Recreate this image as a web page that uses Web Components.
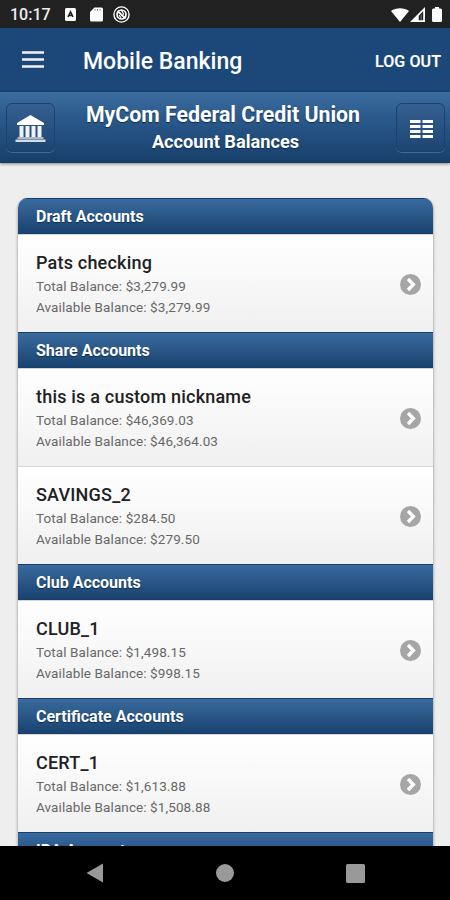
<!DOCTYPE html>
<html lang="en">
<head>
<meta charset="utf-8">
<title>Mobile Banking</title>
<style>
    html, body {
        margin: 0;
        height: 100%;
        overflow: hidden;
        background: #eeeeee;
        font-family: Roboto, "Liberation Sans", sans-serif;
    }
    body {
        display: flex;
        flex-direction: column;
    }
</style>
</head>
<body>
<status-bar time="10:17"></status-bar>
<app-bar action="LOG OUT">Mobile Banking</app-bar>
<page-header>
    <span slot="title">MyCom Federal Credit Union</span>
    <span slot="subtitle">Account Balances</span>
</page-header>
<account-list>
    <account-group label="Draft Accounts">
        <account-item total="$3,279.99" available="$3,279.99">Pats checking</account-item>
    </account-group>
    <account-group label="Share Accounts">
        <account-item total="$46,369.03" available="$46,364.03">this is a custom nickname</account-item>
        <account-item total="$284.50" available="$279.50">SAVINGS_2</account-item>
    </account-group>
    <account-group label="Club Accounts">
        <account-item total="$1,498.15" available="$998.15">CLUB_1</account-item>
    </account-group>
    <account-group label="Certificate Accounts">
        <account-item total="$1,613.88" available="$1,508.88">CERT_1</account-item>
    </account-group>
    <account-group label="IRA Accounts"></account-group>
</account-list>
<nav-bar></nav-bar>

<script>
// attach an open shadow root filled from a markup string
function render(element, markup) {
    const template = document.createElement('template');
    template.innerHTML = markup;
    element.attachShadow({ mode: 'open' });
    element.shadowRoot.appendChild(template.content.cloneNode(true));
}

// <status-bar> system clock, notifications and signal icons
class StatusBar extends HTMLElement {
    constructor() {
        super();
        render(this, `
            <style>
                :host {
                    display: flex;
                    flex: none;
                    align-items: center;
                    box-sizing: border-box;
                    height: 28px;
                    padding: 1px 8px 0 10px;
                    background: #212121;
                    color: #eee;
                    font-size: 16px;
                    font-weight: 500;
                }
                #time { width: 55px; }
                svg { display: block; fill: #fff; }
                .left { display: flex; align-items: center; }
                .right { display: flex; align-items: center; margin-left: auto; }
            </style>
            <span id="time"></span>
            <div class="left">
                <svg width="11" height="13" viewBox="0 0 11 13"><rect width="11" height="13" rx="1.5"/><path d="M3 9 5.500 3.800 8 9M4 7.500h3" fill="none" stroke="#212121" stroke-width="1.600"/></svg>
                <svg width="13" height="15" viewBox="0 0 13 15" style="margin-left:14px"><path d="M4.500.500H11.500a1.500 1.500 0 0 1 1.500 1.500v11a1.500 1.500 0 0 1-1.500 1.500h-10A1.500 1.500 0 0 1 0 13V5z"/><path d="M5 2v1.500M7.500 2v1.500M10 2v1.500" stroke="#212121" stroke-width="1" opacity=".6"/></svg>
                <svg width="17" height="17" viewBox="0 0 17 17" style="margin-left:10px"><g fill="none" stroke="#fff"><circle cx="8.500" cy="8.500" r="7.600" stroke-width="1.400"/><circle cx="8.500" cy="8.500" r="4.500" stroke-width="1.700"/><path d="m4.500 5 8 7.500" stroke-width="1.800"/><path d="M7.500 4.500c3 .5 2 3 3.500 4M6 9l2 3" stroke-width="1.200"/></g></svg>
            </div>
            <div class="right">
                <svg width="18" height="14" viewBox="0 0 18 14"><path d="M0 3C5-.8 13-.8 18 3L9 14z"/></svg>
                <svg width="15" height="15" viewBox="0 0 15 15" style="margin-left:1px"><path d="M15 0v15H0zM13.200 4.300 8.700 8.800v4.500h4.500z" fill-rule="evenodd"/><path d="M12 7v6h-1.600V8.600z" opacity=".25"/></svg>
                <svg width="10" height="15" viewBox="0 0 10 15" style="margin-left:7px"><path d="M3 0h4v1.500h1.500A1.500 1.500 0 0 1 10 3v10.500A1.500 1.500 0 0 1 8.500 15h-7A1.500 1.500 0 0 1 0 13.500V3a1.500 1.500 0 0 1 1.500-1.500H3z"/></svg>
            </div>
        `);
        this.shadowRoot.querySelector('#time').innerText = this.getAttribute('time');
    }
}

// <app-bar> menu button, app title and a text action
class AppBar extends HTMLElement {
    constructor() {
        super();
        render(this, `
            <style>
                :host {
                    display: flex;
                    flex: none;
                    align-items: center;
                    box-sizing: border-box;
                    height: 64px;
                    padding: 2px 9px 0 22px;
                    background: #1b4878;
                    color: #fff;
                }
                svg { display: block; margin-right: 39px; margin-bottom: 3px; }
                #title { font-size: 23px; font-weight: 500; }
                #action { margin-left: auto; font-size: 16px; font-weight: 500; letter-spacing: 0.1px; -webkit-text-stroke: 0.2px #fff; }
            </style>
            <svg width="22" height="17" viewBox="0 0 22 17"><path d="M0 1.500h22M0 8.500h22M0 15.500h22" stroke="#f2f2f8" stroke-width="2.600"/></svg>
            <span id="title"><slot></slot></span>
            <span id="action"></span>
        `);
        this.shadowRoot.querySelector('#action').innerText = this.getAttribute('action');
    }
}

// <page-header> institution name between two icon buttons
class PageHeader extends HTMLElement {
    constructor() {
        super();
        render(this, `
            <style>
                :host {
                    display: flex;
                    flex: none;
                    align-items: center;
                    justify-content: space-between;
                    box-sizing: border-box;
                    height: 71px;
                    padding: 1px 5px 0 6px;
                    background: linear-gradient(#3d6c9f, #2b5a8c 35%, #173f6b);
                    border-bottom: 1px solid #123a63;
                    box-shadow: 0 1px 3px rgba(0, 0, 0, 0.45);
                    color: #fff;
                    font-weight: 700;
                    text-shadow: 0 1px 1px #0c2d52;
                }
                .button {
                    display: flex;
                    align-items: center;
                    justify-content: center;
                    box-sizing: border-box;
                    width: 49px;
                    height: 49px;
                    border: 1px solid #1a426d;
                    border-radius: 6px;
                    background: linear-gradient(#345f8f, #1c4573);
                    box-shadow: 0 1px 0 rgba(255, 255, 255, 0.2);
                }
                .text { margin: 0 0 1px -5px; text-align: center; }
                .title { font-size: 21.3px; line-height: 28px; }
                .subtitle { padding-left: 5px; font-size: 18.2px; line-height: 25px; }
            </style>
            <div class="button">
                <svg width="31" height="27" viewBox="0 0 31 27" style="margin-top:2px"><path d="M15.500 0 29 8v2H2V8z" fill="#fff"/><path d="M4.500 11h4v11h-4zM10.500 11h4v11h-4zM16.500 11h4v11h-4zM22.500 11h4v11h-4z" fill="#f0f2f5"/><path d="M2.500 22h26v2h-26z" fill="#aab9ca"/><path d="M.5 24.500h30V27H.5z" fill="#d5dce5"/></svg>
            </div>
            <div class="text">
                <div class="title"><slot name="title"></slot></div>
                <div class="subtitle"><slot name="subtitle"></slot></div>
            </div>
            <div class="button">
                <svg width="23" height="18" viewBox="0 0 23 18" style="margin:2px 0 0 2px"><path d="M0 1.500h10.500M12.500 1.500H23M0 6.500h10.500M12.500 6.500H23M0 11.500h10.500M12.500 11.500H23M0 16.500h10.500M12.500 16.500H23" stroke="#fff" stroke-width="3"/></svg>
            </div>
        `);
    }
}

// <account-list> inset card which holds the groups
class AccountList extends HTMLElement {
    constructor() {
        super();
        render(this, `
            <style>
                :host {
                    display: block;
                    flex: 1;
                    min-height: 0;
                    overflow: hidden;
                    padding: 35px 16px 0 17px;
                }
                .card {
                    overflow: hidden;
                    border: 1px solid #c6c6c6;
                    border-top: 0;
                    border-radius: 10px 10px 0 0;
                    box-shadow: 0 1px 3px rgba(0, 0, 0, 0.2);
                }
            </style>
            <div class="card"><slot></slot></div>
        `);
    }
}

// <account-group> blue divider followed by its accounts
class AccountGroup extends HTMLElement {
    constructor() {
        super();
        render(this, `
            <style>
                :host { display: block; }
                #label {
                    box-sizing: border-box;
                    height: 36px;
                    padding-left: 18px;
                    border: 1px solid #173f6b;
                    border-left: 0;
                    border-right: 0;
                    background: linear-gradient(#396a9e, #194370);
                    color: #fff;
                    font-size: 16px;
                    font-weight: 700;
                    line-height: 35px;
                    text-shadow: 0 1px 1px #0c2d52;
                }
            </style>
            <div id="label"></div>
            <slot></slot>
        `);
        this.shadowRoot.querySelector('#label').innerText = this.getAttribute('label');
    }
}

// <account-item> nickname and balances with a chevron
class AccountItem extends HTMLElement {
    constructor() {
        super();
        render(this, `
            <style>
                :host {
                    display: flex;
                    align-items: center;
                    justify-content: space-between;
                    box-sizing: border-box;
                    height: 98px;
                    padding: 0 12px 0 18px;
                    border-top: 1px solid #d6d6d6;
                    background: linear-gradient(#fff, #f0f0f0);
                }
                .name {
                    color: #202124;
                    font-size: 18px;
                    font-weight: 500;
                    line-height: 26px;
                    letter-spacing: 0.2px;
                }
                .balance {
                    color: #686868;
                    font-size: 13.5px;
                    line-height: 20.5px;
                    letter-spacing: 0.1px;
                }
                svg { display: block; margin-top: 1px; }
            </style>
            <div>
                <div class="name"><slot></slot></div>
                <div class="balance" id="total"></div>
                <div class="balance" id="available"></div>
            </div>
            <svg width="21" height="21" viewBox="0 0 21 21"><circle cx="10.500" cy="10.500" r="10.500" fill="#a6a6a6"/><path d="m8 5 5.300 5.500L8 16" fill="none" stroke="#fff" stroke-width="3.400"/></svg>
        `);
        this.shadowRoot.querySelector('#total').innerText = 'Total Balance: ' + this.getAttribute('total');
        this.shadowRoot.querySelector('#available').innerText = 'Available Balance: ' + this.getAttribute('available');
    }
}

// <nav-bar> system back, home and recents
class NavBar extends HTMLElement {
    constructor() {
        super();
        render(this, `
            <style>
                :host {
                    display: grid;
                    flex: none;
                    grid-template-columns: repeat(3, 130px);
                    justify-content: center;
                    align-items: center;
                    justify-items: center;
                    height: 54px;
                    background: #000;
                }
                svg { display: block; fill: #999; }
            </style>
            <svg width="18" height="20" viewBox="0 0 18 20"><path d="M17 .5v19L.5 10z"/></svg>
            <svg width="18" height="18" viewBox="0 0 18 18"><circle cx="9" cy="9" r="9"/></svg>
            <svg width="19" height="19" viewBox="0 0 19 19"><rect width="19" height="19" rx="1.500"/></svg>
        `);
    }
}

customElements.define('status-bar', StatusBar);
customElements.define('app-bar', AppBar);
customElements.define('page-header', PageHeader);
customElements.define('account-list', AccountList);
customElements.define('account-group', AccountGroup);
customElements.define('account-item', AccountItem);
customElements.define('nav-bar', NavBar);
</script>
</body>
</html>
